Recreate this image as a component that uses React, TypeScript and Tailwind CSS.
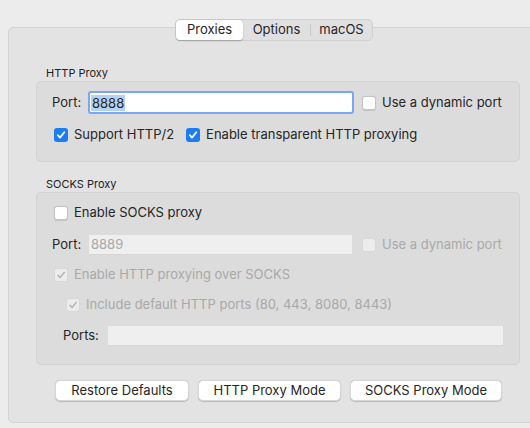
import React from 'react';

function Check({ checked, disabled }: { checked?: boolean; disabled?: boolean }) {
  if (checked && !disabled) {
    return (
      <span className="w-[14px] h-[14px] rounded-[3px] bg-[#1c7cf4] flex items-center justify-center shrink-0">
        <svg width="10" height="10" viewBox="0 0 10 10">
          <path d="M1.8 5.2 L4 7.6 L8.3 2.3" fill="none" stroke="#fff" strokeWidth="1.8" strokeLinecap="round" strokeLinejoin="round" />
        </svg>
      </span>
    );
  }
  if (checked && disabled) {
    return (
      <span className="w-[14px] h-[14px] rounded-[3px] bg-[#ececec] border border-[#d8d8d8] flex items-center justify-center shrink-0">
        <svg width="10" height="10" viewBox="0 0 10 10">
          <path d="M2 5.2 L4 7.5 L8.2 2.4" fill="none" stroke="#b5b5b5" strokeWidth="1.5" strokeLinecap="round" strokeLinejoin="round" />
        </svg>
      </span>
    );
  }
  return (
    <span
      className={
        disabled
          ? 'block w-[14px] h-[14px] rounded-[3px] bg-[#ececec] border border-[#d8d8d8] shrink-0'
          : 'block w-[14px] h-[14px] rounded-[3px] bg-white border border-[#c4c4c4] shadow-[0_0.5px_1px_rgba(0,0,0,0.12)] shrink-0'
      }
    />
  );
}

function Button({ label, width }: { label: string; width: string }) {
  return (
    <div
      className={`${width} h-[21px] rounded-[5px] bg-white border border-[#d6d6d6] shadow-[0_0.5px_1px_rgba(0,0,0,0.18)] flex items-center justify-center text-[13px] text-[#262626]`}
    >
      {label}
    </div>
  );
}

export default function App() {
  return (
    <div className="w-[530px] h-[428px] bg-[#ececec] overflow-hidden relative font-['Inter',sans-serif] text-[#262626]">
      {/* outer tab panel */}
      <div className="ml-[8px] mt-[27px] w-[540px] h-[396px] bg-[#e3e3e3] border border-[#d3d3d3] rounded-[5px] pt-[38px]">
        <div className="ml-[37px] text-[11px] leading-[14px] text-[#222]">HTTP Proxy</div>
        <div className="ml-[27px] mt-[1px] w-[484px] h-[81px] bg-[#dcdcdc] border border-[#d2d2d2] rounded-[5px] pt-[8px]">
          <div className="flex items-center h-[25px]">
            <span className="ml-[15px] text-[13px] w-[34px]">Port:</span>
            <div className="ml-[2px] w-[266px] h-[23px] rounded-[3px] bg-white border-[2px] border-[#7aa7f2] flex items-center">
              <span className="ml-[1px] text-[13px] leading-[16px] bg-[#b3d2f8] px-[1px]">8888</span>
            </div>
            <span className="ml-[8px] flex"><Check /></span>
            <span className="ml-[6px] text-[13px]">Use a dynamic port</span>
          </div>
          <div className="flex items-center h-[22px] mt-[9px]">
            <span className="ml-[17px] flex"><Check checked /></span>
            <span className="ml-[6px] text-[13px]">Support HTTP/2</span>
            <span className="ml-[12px] flex"><Check checked /></span>
            <span className="ml-[6px] text-[13px]">Enable transparent HTTP proxying</span>
          </div>
        </div>

        <div className="ml-[37px] mt-[15px] text-[11px] leading-[14px] text-[#222]">SOCKS Proxy</div>
        <div className="ml-[27px] mt-[1px] w-[484px] h-[173px] bg-[#dcdcdc] border border-[#d2d2d2] rounded-[5px] pt-[9px]">
          <div className="flex items-center h-[22px]">
            <span className="ml-[17px] flex"><Check /></span>
            <span className="ml-[6px] text-[13px]">Enable SOCKS proxy</span>
          </div>
          <div className="flex items-center h-[22px] mt-[10px]">
            <span className="ml-[15px] text-[13px] w-[36px]">Port:</span>
            <div className="ml-[1px] w-[263px] h-[20px] bg-[#efefef] border-b border-[#d6d6d6] flex items-center">
              <span className="ml-[2px] text-[13px] text-[#a9a9a9]">8889</span>
            </div>
            <span className="ml-[10px] flex"><Check disabled /></span>
            <span className="ml-[6px] text-[13px] text-[#a9a9a9]">Use a dynamic port</span>
          </div>
          <div className="flex items-center h-[22px] mt-[8px]">
            <span className="ml-[17px] flex"><Check checked disabled /></span>
            <span className="ml-[6px] text-[13px] text-[#a9a9a9]">Enable HTTP proxying over SOCKS</span>
          </div>
          <div className="flex items-center h-[22px] mt-[8px]">
            <span className="ml-[29px] flex"><Check checked disabled /></span>
            <span className="ml-[6px] text-[13px] text-[#a9a9a9]">Include default HTTP ports (80, 443, 8080, 8443)</span>
          </div>
          <div className="flex items-center h-[22px] mt-[9px]">
            <span className="ml-[26px] text-[13px] w-[45px]">Ports:</span>
            <div className="w-[395px] h-[20px] bg-[#efefef] border-b border-[#d6d6d6]" />
          </div>
        </div>

        <div className="flex mt-[15px] ml-[46px] gap-[9px]">
          <Button label="Restore Defaults" width="w-[134px]" />
          <Button label="HTTP Proxy Mode" width="w-[143px]" />
          <Button label="SOCKS Proxy Mode" width="w-[152px]" />
        </div>
      </div>

      {/* segmented control over the panel's top edge */}
      <div className="absolute left-[175px] top-[19px] h-[22px] w-[198px] rounded-[5px] bg-[#e0e0e0] border border-[#d0d0d0] flex items-center text-[13px]">
        <div className="w-[67px] h-[20px] rounded-[4px] bg-white shadow-[0_0.5px_1.5px_rgba(0,0,0,0.25)] flex items-center justify-center">Proxies</div>
        <div className="w-[67px] flex items-center justify-center">Options</div>
        <div className="w-px h-[12px] bg-[#c8c8c8]" />
        <div className="flex-1 flex items-center justify-center">macOS</div>
      </div>
    </div>
  );
}
